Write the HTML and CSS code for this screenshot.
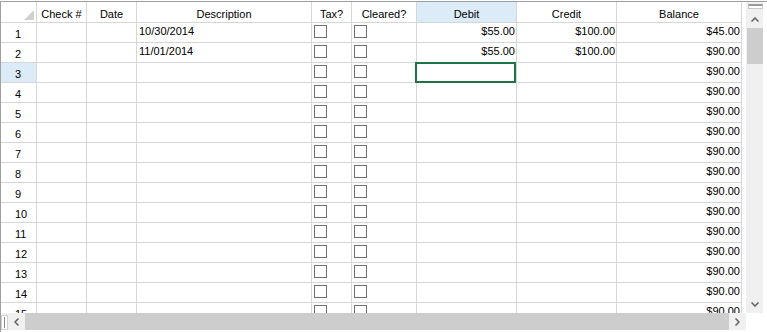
FILE: index.html
```html
<!DOCTYPE html>
<html lang="en">
<head>
    <meta charset="UTF-8">
    <title>Checkbook Register</title>
    <link rel="stylesheet" href="styles.css">
</head>
<body>
    <div class="grid-control">
        <div class="viewport">
            <div class="row header">
                <div class="cell corner-cell">
                    <svg width="10" height="10" viewBox="0 0 10 10"><polygon points="10,0 10,10 0,10" fill="#cfcfcf"/></svg>
                </div>
                <div class="cell">Check #</div>
                <div class="cell">Date</div>
                <div class="cell">Description</div>
                <div class="cell">Tax?</div>
                <div class="cell">Cleared?</div>
                <div class="cell active">Debit</div>
                <div class="cell">Credit</div>
                <div class="cell">Balance</div>
            </div>
            <div id="body"></div>
        </div>

        <div class="vscroll">
            <div class="split-h"></div>
            <div class="arrow">
                <svg width="8" height="5" viewBox="0 0 8 5"><polyline points="0.5,4.5 4,1 7.5,4.5" fill="none" stroke="#606060" stroke-width="1.5"/></svg>
            </div>
            <div class="vthumb"></div>
            <div class="spacer"></div>
            <div class="arrow">
                <svg width="8" height="5" viewBox="0 0 8 5"><polyline points="0.5,0.5 4,4 7.5,0.5" fill="none" stroke="#606060" stroke-width="1.5"/></svg>
            </div>
        </div>

        <div class="hscroll">
            <div class="split-v"><span></span></div>
            <div class="arrow">
                <svg width="5" height="8" viewBox="0 0 5 8"><polyline points="4.5,0.5 1,4 4.5,7.5" fill="none" stroke="#606060" stroke-width="1.5"/></svg>
            </div>
            <div class="hthumb"></div>
            <div class="arrow">
                <svg width="5" height="8" viewBox="0 0 5 8"><polyline points="0.5,0.5 4,4 0.5,7.5" fill="none" stroke="#606060" stroke-width="1.5"/></svg>
            </div>
        </div>
        <div class="corner"></div>
    </div>

    <script>
        const entries = [
            { desc: '10/30/2014', debit: '$55.00', credit: '$100.00', balance: '$45.00' },
            { desc: '11/01/2014', debit: '$55.00', credit: '$100.00', balance: '$90.00' }
        ];
        const body = document.getElementById('body');

        for (let i = 0; i < 15; i++) {
            const e = entries[i] || { desc: '', debit: '', credit: '', balance: '$90.00' };
            const row = document.createElement('div');
            row.className = 'row';
            row.innerHTML =
                '<div class="cell rowhead' + (i === 2 ? ' active' : '') + '">' + (i + 1) + '</div>' +
                '<div class="cell"></div>' +
                '<div class="cell"></div>' +
                '<div class="cell">' + e.desc + '</div>' +
                '<div class="cell"><span class="box"></span></div>' +
                '<div class="cell"><span class="box"></span></div>' +
                '<div class="cell num' + (i === 2 ? ' selected' : '') + '">' + e.debit + '</div>' +
                '<div class="cell num">' + e.credit + '</div>' +
                '<div class="cell num">' + e.balance + '</div>';
            body.appendChild(row);
        }
    </script>
</body>
</html>
```

FILE: styles.css
```css
body {
    margin: 0;
    background-color: #fff;
    font-family: 'Liberation Sans', Arial, sans-serif;
    font-size: 11px;
    line-height: 13px;
    color: #000;
}

.grid-control {
    margin-top: 1px;
    width: 767px;
    height: 331px;
    box-sizing: border-box;
    border-top: 1px solid #a0a0a0;
    border-left: 1px solid #a0a0a0;
    padding: 0 4px 2px 0;
    display: grid;
    grid-template-columns: 745px 17px;
    grid-template-rows: 311px 17px;
}

.viewport {
    overflow: hidden;
}

.row {
    display: grid;
    grid-template-columns: 36px 50px 50px 175px 40px 65px 100px 100px 125px;
    height: 20px;
}

.row.header {
    height: 21px;
}

.cell {
    box-sizing: border-box;
    border-right: 1px solid #d6d6d6;
    border-bottom: 1px solid #d6d6d6;
    padding: 2px 2px 0 2px;
    white-space: nowrap;
    overflow: hidden;
    position: relative;
}

.header .cell {
    text-align: center;
    padding-top: 6px;
}

.header .corner-cell {
    display: flex;
    justify-content: flex-end;
    align-items: flex-end;
    padding: 0 2px 2px 0;
}

.cell.active {
    background-color: #dcebf8;
}

.rowhead {
    padding: 5px 0 0 14px;
}

.num {
    text-align: right;
    padding-right: 1px;
}

.cell.selected {
    overflow: visible;
    z-index: 2;
}

.cell.selected::after {
    content: '';
    position: absolute;
    top: -1px;
    left: -2px;
    right: 0;
    bottom: -1px;
    border: 2px solid #217346;
}

.box {
    display: block;
    width: 13px;
    height: 13px;
    box-sizing: border-box;
    border: 1px solid #707070;
    background-color: #fff;
}

/* scrollbars */
.vscroll {
    background-color: #f0f0f0;
    display: flex;
    flex-direction: column;
}

.split-h {
    height: 5px;
    margin: 2px 0 1px 2px;
    box-sizing: border-box;
    background-color: #fff;
    border: 1px solid #c8c8c8;
    border-top: 2px solid #9a9a9a;
}

.vscroll .arrow {
    height: 18px;
    display: flex;
    justify-content: center;
    align-items: center;
}

.vscroll .arrow:last-child {
    height: 17px;
}

.vthumb {
    height: 36px;
    margin: 0 0 0 1px;
    background-color: #cdcdcd;
}

.spacer {
    flex: 1;
}

.hscroll {
    background-color: #f0f0f0;
    display: flex;
}

.split-v {
    width: 7px;
    box-sizing: border-box;
    margin-top: 2px;
    background-color: #fff;
    border: 1px solid #d0d0d0;
    display: flex;
    justify-content: center;
    padding: 1px 0;
}

.split-v span {
    width: 1px;
    background-color: #8a8a8a;
}

.hscroll .arrow {
    width: 17px;
    display: flex;
    justify-content: center;
    align-items: center;
}

.hthumb {
    flex: 1;
    background-color: #cdcdcd;
}

.corner {
    background-color: #fff;
}
```
